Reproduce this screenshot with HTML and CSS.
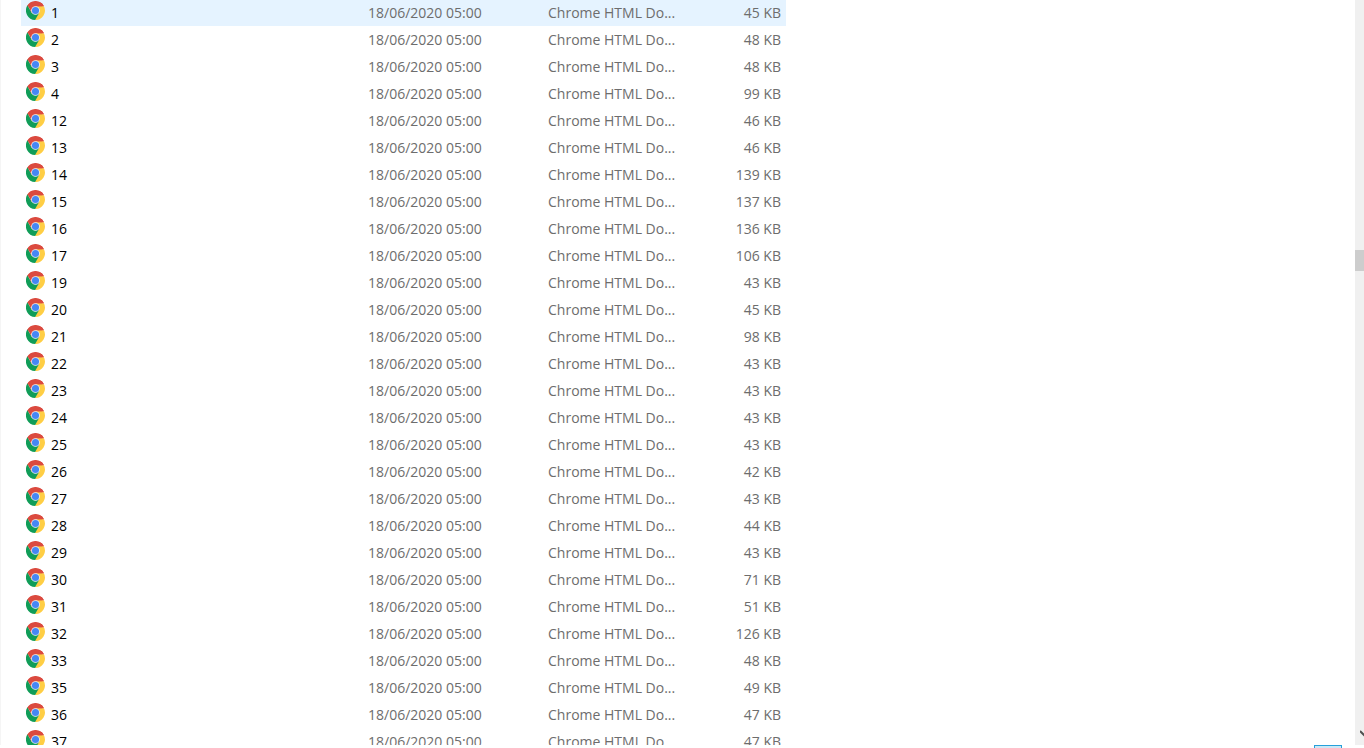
FILE: index.html
```html
<!DOCTYPE html>
<html lang="en">
<head>
<meta charset="utf-8">
<title>Files</title>
<link rel="stylesheet" href="styles.css">
</head>
<body>
<svg class="defs" aria-hidden="true">
<symbol id="chrome" viewBox="0 0 48 48">
<path fill="#db4a3f" d="M24 24 3.2 12A24 24 0 0 1 44.8 12Z"/>
<path fill="#ffce44" d="M24 24V13H45.3A24 24 0 0 1 23 48Z"/>
<path fill="#109d58" d="M24 24 14.5 29.5 3.8 11A24 24 0 0 0 23 48L33.5 29.5Z"/>
<path fill="#db4a3f" d="M24 24 14.5 29.5 3.8 11 12 5h28l5.3 8H24Z"/>
<circle cx="24" cy="24" r="11" fill="#eef1f5"/>
<circle cx="24" cy="24" r="9" fill="#4687f4"/>
</symbol>
</svg>
<div class="window">
<main class="list">
<table class="files">
<colgroup><col class="col-name"><col class="col-date"><col class="col-type"><col class="col-size"></colgroup>
<tbody>
<tr class="selected"><td class="name"><svg class="icon"><use href="#chrome"/></svg>1</td><td>18/06/2020 05:00</td><td>Chrome HTML Do...</td><td class="size">45 KB</td></tr>
<tr><td class="name"><svg class="icon"><use href="#chrome"/></svg>2</td><td>18/06/2020 05:00</td><td>Chrome HTML Do...</td><td class="size">48 KB</td></tr>
<tr><td class="name"><svg class="icon"><use href="#chrome"/></svg>3</td><td>18/06/2020 05:00</td><td>Chrome HTML Do...</td><td class="size">48 KB</td></tr>
<tr><td class="name"><svg class="icon"><use href="#chrome"/></svg>4</td><td>18/06/2020 05:00</td><td>Chrome HTML Do...</td><td class="size">99 KB</td></tr>
<tr><td class="name"><svg class="icon"><use href="#chrome"/></svg>12</td><td>18/06/2020 05:00</td><td>Chrome HTML Do...</td><td class="size">46 KB</td></tr>
<tr><td class="name"><svg class="icon"><use href="#chrome"/></svg>13</td><td>18/06/2020 05:00</td><td>Chrome HTML Do...</td><td class="size">46 KB</td></tr>
<tr><td class="name"><svg class="icon"><use href="#chrome"/></svg>14</td><td>18/06/2020 05:00</td><td>Chrome HTML Do...</td><td class="size">139 KB</td></tr>
<tr><td class="name"><svg class="icon"><use href="#chrome"/></svg>15</td><td>18/06/2020 05:00</td><td>Chrome HTML Do...</td><td class="size">137 KB</td></tr>
<tr><td class="name"><svg class="icon"><use href="#chrome"/></svg>16</td><td>18/06/2020 05:00</td><td>Chrome HTML Do...</td><td class="size">136 KB</td></tr>
<tr><td class="name"><svg class="icon"><use href="#chrome"/></svg>17</td><td>18/06/2020 05:00</td><td>Chrome HTML Do...</td><td class="size">106 KB</td></tr>
<tr><td class="name"><svg class="icon"><use href="#chrome"/></svg>19</td><td>18/06/2020 05:00</td><td>Chrome HTML Do...</td><td class="size">43 KB</td></tr>
<tr><td class="name"><svg class="icon"><use href="#chrome"/></svg>20</td><td>18/06/2020 05:00</td><td>Chrome HTML Do...</td><td class="size">45 KB</td></tr>
<tr><td class="name"><svg class="icon"><use href="#chrome"/></svg>21</td><td>18/06/2020 05:00</td><td>Chrome HTML Do...</td><td class="size">98 KB</td></tr>
<tr><td class="name"><svg class="icon"><use href="#chrome"/></svg>22</td><td>18/06/2020 05:00</td><td>Chrome HTML Do...</td><td class="size">43 KB</td></tr>
<tr><td class="name"><svg class="icon"><use href="#chrome"/></svg>23</td><td>18/06/2020 05:00</td><td>Chrome HTML Do...</td><td class="size">43 KB</td></tr>
<tr><td class="name"><svg class="icon"><use href="#chrome"/></svg>24</td><td>18/06/2020 05:00</td><td>Chrome HTML Do...</td><td class="size">43 KB</td></tr>
<tr><td class="name"><svg class="icon"><use href="#chrome"/></svg>25</td><td>18/06/2020 05:00</td><td>Chrome HTML Do...</td><td class="size">43 KB</td></tr>
<tr><td class="name"><svg class="icon"><use href="#chrome"/></svg>26</td><td>18/06/2020 05:00</td><td>Chrome HTML Do...</td><td class="size">42 KB</td></tr>
<tr><td class="name"><svg class="icon"><use href="#chrome"/></svg>27</td><td>18/06/2020 05:00</td><td>Chrome HTML Do...</td><td class="size">43 KB</td></tr>
<tr><td class="name"><svg class="icon"><use href="#chrome"/></svg>28</td><td>18/06/2020 05:00</td><td>Chrome HTML Do...</td><td class="size">44 KB</td></tr>
<tr><td class="name"><svg class="icon"><use href="#chrome"/></svg>29</td><td>18/06/2020 05:00</td><td>Chrome HTML Do...</td><td class="size">43 KB</td></tr>
<tr><td class="name"><svg class="icon"><use href="#chrome"/></svg>30</td><td>18/06/2020 05:00</td><td>Chrome HTML Do...</td><td class="size">71 KB</td></tr>
<tr><td class="name"><svg class="icon"><use href="#chrome"/></svg>31</td><td>18/06/2020 05:00</td><td>Chrome HTML Do...</td><td class="size">51 KB</td></tr>
<tr><td class="name"><svg class="icon"><use href="#chrome"/></svg>32</td><td>18/06/2020 05:00</td><td>Chrome HTML Do...</td><td class="size">126 KB</td></tr>
<tr><td class="name"><svg class="icon"><use href="#chrome"/></svg>33</td><td>18/06/2020 05:00</td><td>Chrome HTML Do...</td><td class="size">48 KB</td></tr>
<tr><td class="name"><svg class="icon"><use href="#chrome"/></svg>35</td><td>18/06/2020 05:00</td><td>Chrome HTML Do...</td><td class="size">49 KB</td></tr>
<tr><td class="name"><svg class="icon"><use href="#chrome"/></svg>36</td><td>18/06/2020 05:00</td><td>Chrome HTML Do...</td><td class="size">47 KB</td></tr>
<tr><td class="name"><svg class="icon"><use href="#chrome"/></svg>37</td><td>18/06/2020 05:00</td><td>Chrome HTML Do...</td><td class="size">47 KB</td></tr>
</tbody>
</table>
</main>
<div class="scrollbar">
<div class="thumb"></div>
<button class="scroll-down" type="button" aria-label="Scroll down"><svg class="chevron" viewBox="0 0 10 7"><path d="M0 1 5 6 10 1" fill="none" stroke="#505050" stroke-width="2"/></svg></button>
</div>
</div>
<footer class="status"><button class="view" type="button" aria-label="Details view"></button></footer>
</body>
</html>
```
FILE: styles.css
```css
* {
  box-sizing: border-box;
}

body {
  display: flex;
  flex-direction: column;
  height: 100vh;
  margin: 0;
  overflow: hidden;
  background: #fff;
  color: #6d6d6d;
  font: 14px/24px "Open Sans", "Noto Sans", sans-serif;
}

.defs {
  position: absolute;
  width: 0;
  height: 0;
}

.window {
  display: flex;
  flex: 1;
  min-height: 0;
}

.list {
  flex: 1;
  overflow: hidden;
  padding-left: 20px;
  border-left: 1px solid #f5f5f5;
}

.files {
  width: 765px;
  table-layout: fixed;
  border-collapse: separate;
  border-spacing: 0;
}

.col-name { width: 347px; }
.col-date { width: 180px; }
.col-type { width: 148px; }
.col-size { width: 90px; }

.files td {
  height: 27px;
  padding: 1px 0;
  border-bottom: 1px solid transparent;
  background-clip: padding-box;
  white-space: nowrap;
}

.files .name {
  padding-left: 5px;
  color: #000;
}

.files .size {
  padding-right: 5px;
  text-align: right;
}

.selected td {
  background-color: #e5f3ff;
}

.icon {
  float: left;
  width: 19px;
  height: 19px;
  margin-right: 6px;
}

.scrollbar {
  display: flex;
  flex-direction: column;
  justify-content: space-between;
  width: 9px;
  padding-top: 250px;
  overflow: hidden;
  background: #f0f0f0;
}

.thumb {
  height: 21px;
  background: #cdcdcd;
}

.scroll-down {
  display: flex;
  width: 19px;
  height: 17px;
  padding: 2px 5px;
  border: 0;
  background: none;
}

.chevron {
  flex: none;
  width: 10px;
  height: 7px;
}

.status {
  display: flex;
  justify-content: flex-end;
  height: 3px;
  padding-right: 22px;
  overflow: hidden;
}

.view {
  width: 28px;
  height: 22px;
  padding: 0;
  border: 1px solid #26a0da;
  background: #cbe8f6;
}
```
